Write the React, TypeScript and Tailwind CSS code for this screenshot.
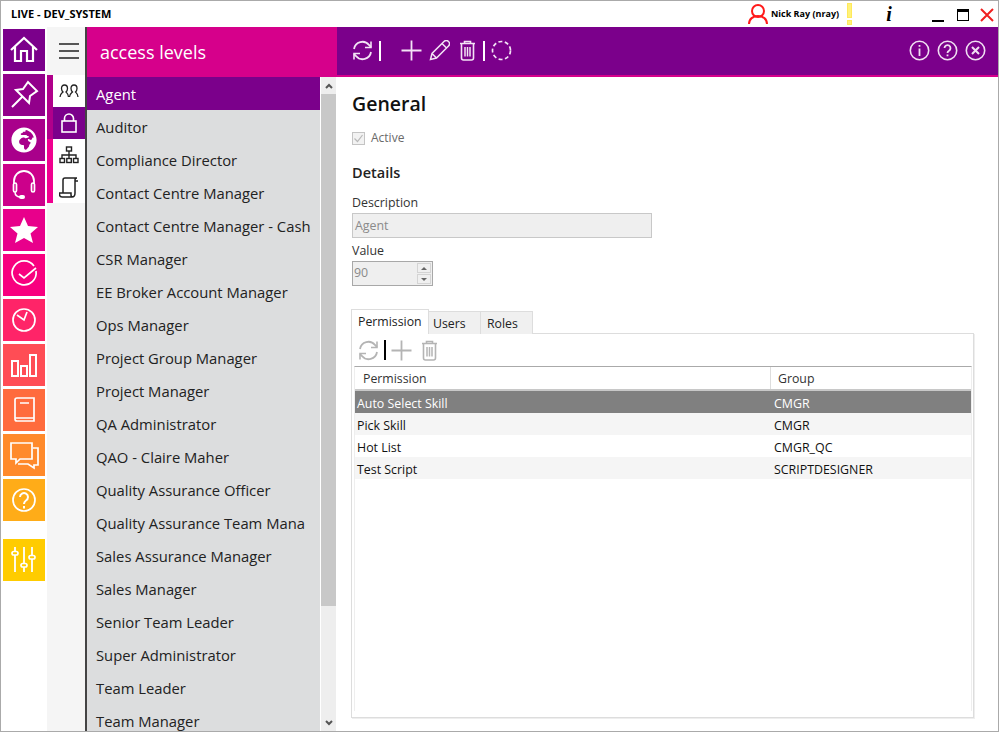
import { FaGlobeAfrica } from "react-icons/fa";

const font = "font-['Open_Sans','Noto_Sans',sans-serif]";

const levels = [
  "Agent",
  "Auditor",
  "Compliance Director",
  "Contact Centre Manager",
  "Contact Centre Manager - Cash",
  "CSR Manager",
  "EE Broker Account Manager",
  "Ops Manager",
  "Project Group Manager",
  "Project Manager",
  "QA Administrator",
  "QAO - Claire Maher",
  "Quality Assurance Officer",
  "Quality Assurance Team Mana",
  "Sales Assurance Manager",
  "Sales Manager",
  "Senior Team Leader",
  "Super Administrator",
  "Team Leader",
  "Team Manager",
];

const permissions = [
  ["Auto Select Skill", "CMGR"],
  ["Pick Skill", "CMGR"],
  ["Hot List", "CMGR_QC"],
  ["Test Script", "SCRIPTDESIGNER"],
];

const Icon = ({ children, size = 42, box = 42, className = "" }: { children: React.ReactNode; size?: number; box?: number; className?: string }) => (
  <svg width={size} height={size} viewBox={`0 0 ${box} ${box}`} fill="none" stroke="currentColor" strokeWidth="1.700" className={className}>
    {children}
  </svg>
);

const tiles = [
  {
    color: "bg-[#7b008b]",
    icon: <path d="M8 21 21 9l13 12M12 18v14h6V22h6v10h6V18" strokeWidth="2.200" />,
  },
  {
    color: "bg-[#92008b]",
    icon: <path d="M9 33l10-10M13 16l13 13 1-7 7-5-9-9-5 7z" strokeWidth="2" />,
  },
  {
    color: "bg-[#a9008b]",
    icon: (
      <foreignObject x="8" y="8" width="26" height="26">
        <FaGlobeAfrica size={26} color="white" />
      </foreignObject>
    ),
  },
  {
    color: "bg-[#cc008b]",
    icon: (
      <>
        <path d="M11 20v-3a10 10 0 0 1 20 0v3" strokeWidth="1.800" />
        <rect x="10.500" y="19" width="3" height="9" rx="1.500" />
        <rect x="28.500" y="19" width="3" height="9" rx="1.500" />
        <path d="M12 28c0 3 2 5 6 5" strokeWidth="1.500" />
        <rect x="16" y="31" width="6" height="4" rx="2" fill="currentColor" stroke="none" />
      </>
    ),
  },
  {
    color: "bg-[#e8008b]",
    icon: <path d="M21 8l4 9 10 1-7.500 6.500L30 34l-9-5-9 5 2.500-9.500L7 18l10-1z" fill="currentColor" stroke="none" />,
  },
  {
    color: "bg-[#f8007f]",
    icon: <path d="M31 12a12 12 0 1 0 2 5M16 20l5 4 12-10" />,
  },
  {
    color: "bg-[#ff2468]",
    icon: (
      <>
        <circle cx="21" cy="21" r="11" />
        <path d="M14 16l7 5 3-8" />
      </>
    ),
  },
  {
    color: "bg-[#ff4d55]",
    icon: <path d="M9 17h6v15H9zM18 22h6v10h-6zM27 11h6v21h-6z" strokeWidth="2" />,
  },
  {
    color: "bg-[#ff6b3d]",
    icon: <path d="M12 29V11a2 2 0 0 1 2-2h17v23H14a2 2 0 0 1-2-2v-1h19M17 14h9" />,
  },
  {
    color: "bg-[#ff8a2b]",
    icon: <path d="M8 9h21v16H17l-4 4v-4H8zM30 14h5v17h-4v3l-6-4H15" />,
  },
  {
    color: "bg-[#ffac18]",
    icon: (
      <>
        <circle cx="21" cy="21" r="11" />
        <path d="M17 18a4 4 0 1 1 6 3.500c-1.500 1-2 1.500-2 3.500M21 27v2.500" strokeWidth="2" />
      </>
    ),
  },
];

const Sliders = () => (
  <Icon>
    <path d="M12 8v25M21 8v25M29 8v25" strokeWidth="1.800" />
    <rect x="9" y="12.500" width="6" height="3.500" rx="1.700" fill="#ffcc00" />
    <rect x="18" y="24.500" width="6" height="3.500" rx="1.700" fill="#ffcc00" />
    <rect x="26" y="16.500" width="6" height="3.500" rx="1.700" fill="#ffcc00" />
  </Icon>
);

const Refresh = ({ size = 21 }: { size?: number }) => (
  <svg width={size} height={size} viewBox="0 0 21 21" fill="none" stroke="currentColor" strokeWidth="1.800">
    <path d="M2 9a8.500 8.500 0 0 1 15-4l2 2M19 12a8.500 8.500 0 0 1-15 4l-2-2" />
    <path d="M19 1.500V7.500h-6M2 19.500V13.500h6" strokeWidth="1.600" />
  </svg>
);

const Plus = ({ size = 21 }: { size?: number }) => (
  <svg width={size} height={size} viewBox="0 0 21 21" stroke="currentColor" strokeWidth="1.800">
    <path d="M10.500 0.500v20M0.500 10.500h20" />
  </svg>
);

const Trash = ({ size = 21 }: { size?: number }) => (
  <svg width={size} height={size} viewBox="0 0 21 21" fill="none" stroke="currentColor" strokeWidth="1.600">
    <path d="M3 3.500h15M7.500 3.500V1.500h6v2M4.500 3.500v14.500a2 2 0 0 0 2 2h8a2 2 0 0 0 2-2V3.500" />
    <path d="M8 7v9.500M10.500 7v9.500M13 7v9.500" strokeWidth="1.500" />
  </svg>
);

const RoundButton = ({ children }: { children: React.ReactNode }) => (
  <svg width="21" height="21" viewBox="0 0 21 21" fill="none" stroke="currentColor" strokeWidth="1.600">
    <circle cx="10.500" cy="10.500" r="9.200" />
    {children}
  </svg>
);

export default function App() {
  return (
    <div className={`${font} w-[999px] h-[732px] flex flex-col overflow-hidden bg-white border border-[#aaaaaa] text-[#111]`}>
      <div className="h-[26px] flex items-center shrink-0">
        <span className="ml-[10px] w-[100px] text-[11px] font-bold text-black whitespace-nowrap">LIVE - DEV_SYSTEM</span>
        <svg width="20" height="22" viewBox="0 0 20 22" fill="none" stroke="#ff1a1a" strokeWidth="2" className="ml-[637px]">
          <circle cx="10" cy="8" r="6" />
          <path d="M1 21c0-5 4-8 9-8s9 3 9 8" />
        </svg>
        <span className="ml-[3px] w-[77px] text-[9px] font-bold text-black whitespace-nowrap">Nick Ray (nray)</span>
        <svg width="5" height="22" viewBox="0 0 5 22" className="ml-[-1px]">
          <rect x="0.500" y="0.500" width="4" height="14" fill="#fff27a" stroke="#ffe95c" />
          <rect x="0.500" y="17.500" width="4" height="4" fill="#fff27a" stroke="#ffe95c" />
        </svg>
        <span className="ml-[31px] w-[12px] text-center font-['Liberation_Serif',serif] text-[20px] italic font-bold leading-none text-black">i</span>
        <div className="ml-[37px] mt-[13px] w-[12px] h-[2px] bg-black" />
        <div className="ml-[13px] w-[12px] h-[12px] border border-black border-t-[3px] mt-[2px]" />
        <svg width="14" height="14" viewBox="0 0 14 14" stroke="#f02020" strokeWidth="2" className="ml-[11px] mt-[2px]">
          <path d="M1 1l12 12M13 1L1 13" />
        </svg>
      </div>

      <div className="flex flex-1 min-h-0">
        <div className="w-[46px] shrink-0 pt-[2px] pl-[2px] flex flex-col gap-[3px]">
          {tiles.map((tile, i) => (
            <div key={i} className={`w-[42px] h-[42px] shrink-0 text-white ${tile.color}`}>
              <Icon>{tile.icon}</Icon>
            </div>
          ))}
          <div className="w-[42px] h-[42px] shrink-0 mt-[15px] bg-[#ffcc00] text-white">
            <Sliders />
          </div>
        </div>

        <div className="w-[40px] shrink-0 bg-[#f5f5f5] border-r-2 border-[#444444] flex flex-col">
          <div className="h-[48px] shrink-0 flex items-center justify-center pl-[6px] pb-[1px]">
            <svg width="20" height="16" viewBox="0 0 20 16" stroke="#222" strokeWidth="1.600">
              <path d="M0 1h20M0 8h20M0 15h20" />
            </svg>
          </div>
          <div className="flex">
            <div className="w-[6px] h-[128px] flex flex-col">
              <div className="h-[64px] bg-[#b0008b]" />
              <div className="h-[64px] bg-[#f0008f]" />
            </div>
            <div className="w-[32px] flex flex-col bg-white">
              <div className="h-[32px] flex items-center justify-center text-[#222]">
                <svg width="20" height="14" viewBox="0 0 20 14" fill="none" stroke="currentColor" strokeWidth="1.300">
                  <path d="M1 13c0-3 2-4 3-5-1-1-1.500-2-1.500-3.500C2.500 2.500 3.500 1 5.500 1s3 1.500 3 3.500c0 1.500-.5 2.500-1.500 3.500 1 1 2.500 2 2.500 5" />
                  <path d="M10.500 13c0-3 2-4 3-5-1-1-1.500-2-1.500-3.500 0-2 1-3.500 3-3.500s3 1.500 3 3.500c0 1.500-.5 2.500-1.500 3.500 1 1 2.500 2 2.500 5" />
                </svg>
              </div>
              <div className="h-[32px] flex items-center justify-center bg-[#7b008b] text-white">
                <svg width="16" height="20" viewBox="0 0 16 20" fill="none" stroke="currentColor" strokeWidth="1.600">
                  <rect x="1" y="8" width="14" height="11" />
                  <path d="M3.500 8V5.500a4.500 4.500 0 0 1 9 0V8" />
                </svg>
              </div>
              <div className="h-[32px] flex items-center justify-center">
                <svg width="20" height="18" viewBox="0 0 20 18" fill="none" stroke="#222" strokeWidth="1.400">
                  <rect x="7.500" y="1" width="5" height="4" />
                  <path d="M10 5v4M3 12V9h14v3M10 9v3" />
                  <rect x="1" y="12.500" width="4.500" height="4" />
                  <rect x="7.800" y="12.500" width="4.500" height="4" />
                  <rect x="14.500" y="12.500" width="4.500" height="4" />
                </svg>
              </div>
              <div className="h-[32px] flex items-center justify-center">
                <svg width="20" height="21" viewBox="0 0 20 21" fill="none" stroke="#222" strokeWidth="1.500">
                  <path d="M4 16V3a2 2 0 0 1 2-2h12c-1.500 0-2 1-2 2v1h3M16 3v13c0 2-1 4-3 4H3c-1.500 0-2.500-1-2.500-2.500V16H12v2c0 1 1 2 2 2" />
                </svg>
              </div>
            </div>
          </div>
        </div>

        <div className="w-[250px] shrink-0 flex flex-col">
          <div className="h-[50px] shrink-0 bg-[#d6008b] flex items-center pl-[13px] pt-[1px] text-[18px] text-white">access levels</div>
          <div className="flex flex-1 min-h-0">
            <div className="w-[233px] bg-[#dcddde] overflow-hidden">
              {levels.map((level, i) => (
                <div
                  key={level}
                  className={`h-[33px] pl-[9px] pt-[2px] flex items-center text-[14.800px] whitespace-nowrap overflow-hidden ${i === 0 ? "bg-[#7b008b] text-white" : "text-[#222]"}`}
                >
                  {level}
                </div>
              ))}
            </div>
            <div className="ml-[1px] w-[15px] bg-[#eeeeee] flex flex-col">
              <div className="h-[17px] shrink-0 flex items-center justify-center">
                <svg width="8" height="6" viewBox="0 0 8 6" fill="none" stroke="#555" strokeWidth="2">
                  <path d="M1 5l3-3 3 3" />
                </svg>
              </div>
              <div className="h-[512px] shrink-0 bg-[#c8c8c8]" />
              <div className="flex-1 flex items-end justify-center pb-[5px]">
                <svg width="8" height="6" viewBox="0 0 8 6" fill="none" stroke="#555" strokeWidth="2">
                  <path d="M1 1l3 3 3-3" />
                </svg>
              </div>
            </div>
          </div>
        </div>

        <div className="flex-1 min-w-0 flex flex-col">
          <div className="h-[50px] shrink-0 bg-[#7b008b] border-b-2 border-[#d6008b] flex items-center text-white pb-[1px]">
            <div className="ml-[15px] text-[#f3e3f5]">
              <Refresh />
            </div>
            <div className="ml-[6px] w-[2px] h-[20px] bg-white" />
            <div className="ml-[20px] text-[#f3e3f5]">
              <Plus />
            </div>
            <svg width="21" height="21" viewBox="0 0 21 21" fill="none" stroke="#f3e3f5" strokeWidth="1.500" className="ml-[7px]">
              <path d="M1.500 19.500l1.500-6L15 1.500a2.500 2.500 0 0 1 4.500 4.500L7.500 18zM3 13.500L7.500 18M13 3.500l4.500 4.500" />
            </svg>
            <div className="ml-[7px] text-[#f3e3f5]">
              <Trash />
            </div>
            <div className="ml-[5px] w-[2px] h-[20px] bg-white" />
            <svg width="21" height="21" viewBox="0 0 21 21" fill="none" stroke="#f3e3f5" strokeWidth="1.700" strokeDasharray="4 2.500" className="ml-[6px]">
              <circle cx="10.500" cy="10.500" r="9" />
            </svg>
            <div className="ml-auto mr-[12px] flex gap-[7px] text-[#f0dff2]">
              <RoundButton>
                <path d="M10.500 5v1.800M10.500 8.500V16" strokeWidth="1.800" />
              </RoundButton>
              <RoundButton>
                <path d="M7.500 8a3 3 0 1 1 4.500 2.700c-1 .6-1.500 1.100-1.500 2.300M10.500 14.500v1.800" strokeWidth="1.800" />
              </RoundButton>
              <RoundButton>
                <path d="M7 7l7 7M14 7l-7 7" strokeWidth="2" />
              </RoundButton>
            </div>
          </div>

          <div className="flex-1 min-h-0 pl-[15px] pr-[24px] flex flex-col">
            <h1 className="mt-[13px] h-[28px] leading-[28px] text-[19.500px] font-semibold text-[#111]">General</h1>
            <div className="mt-[13px] h-[14px] flex items-center">
              <div className="w-[13px] h-[13px] border border-[#c4c4c4] bg-[#f2f2f2] flex items-center justify-center">
                <svg width="11" height="11" viewBox="0 0 11 11" fill="none" stroke="#b8b8b8" strokeWidth="1.200">
                  <path d="M1.500 5.500l3 3 5-6.500" />
                </svg>
              </div>
              <span className="ml-[6px] text-[12px] text-[#6a6a6a]">Active</span>
            </div>
            <h2 className="mt-[18px] h-[20px] leading-[20px] text-[14.500px] font-semibold text-[#222]">Details</h2>
            <div className="mt-[12px] h-[16px] leading-[16px] text-[12.400px] text-[#333]">Description</div>
            <div className="mt-[2px] w-[300px] h-[25px] bg-[#efefef] border border-[#c8c8c8] pl-[2px] pt-[1px] flex items-center text-[12.400px] text-[#8a8a8a]">Agent</div>
            <div className="mt-[5px] h-[16px] leading-[16px] text-[12.400px] text-[#333]">Value</div>
            <div className="mt-[2px] w-[81px] h-[25px] bg-[#efefef] border border-[#a8a8a8] pl-[1px] flex items-center text-[12.400px] text-[#8a8a8a]">
              90
              <div className="ml-auto mr-[1px] w-[14px] flex flex-col gap-[1px]">
                <div className="h-[10px] bg-[#f0f0f0] border border-[#d4d4d4] flex items-center justify-center">
                  <div className="border-x-[3px] border-x-transparent border-b-[3px] border-b-[#666]" />
                </div>
                <div className="h-[10px] bg-[#f0f0f0] border border-[#d4d4d4] flex items-center justify-center">
                  <div className="border-x-[3px] border-x-transparent border-t-[3px] border-t-[#666]" />
                </div>
              </div>
            </div>

            <div className="mt-[23px] h-[25px] flex items-end relative z-10 -ml-[1px]">
              <div className="w-[78px] h-[25px] bg-white border border-b-0 border-[#dddddd] pl-[6px] pt-[3px] text-[12.300px] text-[#222]">Permission</div>
              <div className="w-[52px] h-[23px] bg-[#f0f0f0] border-r border-t border-[#dddddd] pl-[4px] pt-[3px] text-[12.300px] text-[#222]">Users</div>
              <div className="w-[52px] h-[23px] bg-[#f0f0f0] border-r border-t border-[#dddddd] pl-[6px] pt-[3px] text-[12.300px] text-[#222]">Roles</div>
            </div>
            <div className="-ml-[1px] mt-[-1px] w-[623px] h-[385px] border border-[#dddddd] shadow-[1px_1px_0_#eeeeee] pl-[2px] pr-[1px] flex flex-col">
              <div className="h-[32px] shrink-0 flex items-center text-[#b4b4b4] pl-[4px]">
                <Refresh />
                <div className="ml-[5px] w-[2px] h-[20px] bg-black" />
                <div className="ml-[5px]">
                  <Plus />
                </div>
                <div className="ml-[7px]">
                  <Trash />
                </div>
              </div>
              <div className="flex-1 min-h-0 mb-[6px] border-x border-t border-[#aaaaaa] border-x-[#eeeeee]">
                <div className="h-[24px] flex border-b-2 border-[#c8c8c8] text-[12.300px] text-[#333]">
                  <div className="w-[416px] pl-[8px] pt-[3px] flex items-center border-r border-[#dddddd]">Permission</div>
                  <div className="pl-[7px] pt-[3px] flex items-center">Group</div>
                </div>
                {permissions.map(([name, group], i) => (
                  <div
                    key={name}
                    className={`h-[22px] pt-[4px] flex items-center text-[12.400px] ${i === 0 ? "bg-[#808080] text-white" : i % 2 === 1 ? "bg-[#f5f5f5] text-[#111]" : "bg-white text-[#111]"}`}
                  >
                    <div className="w-[417px] pl-[2px]">{name}</div>
                    <div className="pl-[2px]">{group}</div>
                  </div>
                ))}
              </div>
            </div>
          </div>
        </div>
      </div>
    </div>
  );
}
